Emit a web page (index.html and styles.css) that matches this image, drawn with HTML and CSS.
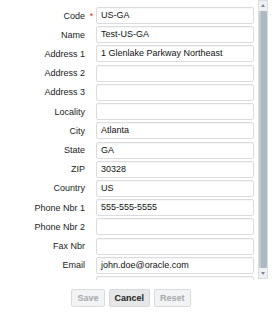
FILE: index.html
```html
<!DOCTYPE html>
<html>
<head>
<meta charset="utf-8">
<link rel="stylesheet" href="styles.css">
</head>
<body>
<div class="dialog">
  <div class="scroller">
    <div class="form">
      <div class="row"><label class="lbl">Code</label><span class="req">*</span><div class="input">US-GA</div></div>
      <div class="row"><label class="lbl">Name</label><span class="req"></span><div class="input">Test-US-GA</div></div>
      <div class="row"><label class="lbl">Address 1</label><span class="req"></span><div class="input">1 Glenlake Parkway Northeast</div></div>
      <div class="row"><label class="lbl">Address 2</label><span class="req"></span><div class="input"></div></div>
      <div class="row"><label class="lbl">Address 3</label><span class="req"></span><div class="input"></div></div>
      <div class="row"><label class="lbl">Locality</label><span class="req"></span><div class="input"></div></div>
      <div class="row"><label class="lbl">City</label><span class="req"></span><div class="input">Atlanta</div></div>
      <div class="row"><label class="lbl">State</label><span class="req"></span><div class="input">GA</div></div>
      <div class="row"><label class="lbl">ZIP</label><span class="req"></span><div class="input">30328</div></div>
      <div class="row"><label class="lbl">Country</label><span class="req"></span><div class="input">US</div></div>
      <div class="row"><label class="lbl">Phone Nbr 1</label><span class="req"></span><div class="input">555-555-5555</div></div>
      <div class="row"><label class="lbl">Phone Nbr 2</label><span class="req"></span><div class="input"></div></div>
      <div class="row"><label class="lbl">Fax Nbr</label><span class="req"></span><div class="input"></div></div>
      <div class="row"><label class="lbl">Email</label><span class="req"></span><div class="input">john.doe@oracle.com</div></div>
      <div class="row"><label class="lbl"></label><span class="req"></span><div class="input"></div></div>
    </div>
    <div class="scrollbar">
      <div class="arrow up"></div>
      <div class="thumb"></div>
      <div class="arrow down"></div>
    </div>
  </div>
  <div class="buttons">
    <button class="btn disabled">Save</button>
    <button class="btn primary">Cancel</button>
    <button class="btn disabled">Reset</button>
  </div>
</div>
</body>
</html>
```
FILE: styles.css
```css
html, body {
  margin: 0;
  padding: 0;
  background: #ffffff;
}
body {
  font-family: "Liberation Sans", Arial, sans-serif;
  font-size: 9px;
  color: #222222;
  width: 272px;
  height: 314px;
  overflow: hidden;
}
.dialog {
  display: flex;
  flex-direction: column;
}
.scroller {
  display: flex;
  height: 280px;
  overflow: hidden;
}
.form {
  width: 258px;
  padding-top: 7px;
  display: flex;
  flex-direction: column;
  gap: 2.23px;
}
.row {
  display: grid;
  grid-template-columns: 86px 10px 158px;
  align-items: center;
  height: 17px;
  flex: none;
}
.lbl {
  text-align: right;
  color: #222222;
  white-space: nowrap;
  padding-right: 1px;
}
.req {
  color: #d4262a;
  text-align: center;
  font-size: 9px;
  line-height: 9px;
  padding-left: 1px;
  position: relative;
  top: 1px;
}
.input {
  height: 17px;
  box-sizing: border-box;
  border: 1px solid #d9dde2;
  border-radius: 2px;
  background: #ffffff;
  box-shadow: inset 0 1px 1px rgba(0,0,0,0.04);
  padding: 0 4px;
  line-height: 15px;
  color: #111111;
  white-space: nowrap;
  overflow: hidden;
}
.scrollbar {
  width: 10px;
  height: 279px;
  box-sizing: border-box;
  border: 1px solid #d9dee2;
  background: #eef0f2;
  display: flex;
  flex-direction: column;
  align-items: center;
}
.arrow {
  width: 0;
  height: 0;
  border-left: 2.5px solid transparent;
  border-right: 2.5px solid transparent;
  margin: 3px 0;
  flex: none;
}
.arrow.up {
  border-bottom: 3px solid #7d8890;
}
.arrow.down {
  border-top: 3px solid #7d8890;
}
.thumb {
  width: 8px;
  flex: 1;
  background: #adb9c2;
  border-left: 2px solid #c1cbd2;
  box-sizing: border-box;
  border-radius: 1px;
  margin: 1px 0;
}
.buttons {
  display: flex;
  justify-content: center;
  gap: 4px;
  padding-top: 9px;
  padding-right: 10px;
}
.btn {
  font-family: "Liberation Sans", Arial, sans-serif;
  font-size: 9px;
  font-weight: bold;
  height: 18px;
  padding: 0 5px;
  border-radius: 2px;
  border: 1px solid #d8dbde;
  background: #f2f3f4;
  line-height: 16px;
}
.btn.disabled {
  color: #a6a9ac;
}
.btn.primary {
  color: #222222;
  background: #e4e6e8;
  border-color: #d6d9dc;
}
```
